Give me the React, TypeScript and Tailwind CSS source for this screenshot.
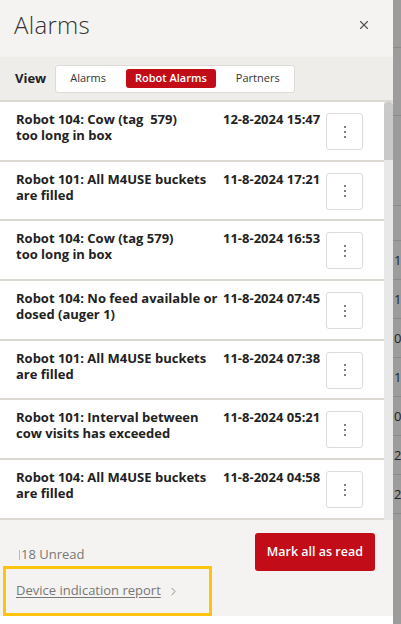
import React from 'react';
import { X, ChevronRight } from 'lucide-react';

const alarms = [
  { lines: ['Robot 104: Cow (tag  579)', 'too long in box'], date: '12-8-2024 15:47' },
  { lines: ['Robot 101: All M4USE buckets', 'are filled'], date: '11-8-2024 17:21' },
  { lines: ['Robot 104: Cow (tag 579)', 'too long in box'], date: '11-8-2024 16:53' },
  { lines: ['Robot 104: No feed available or', 'dosed (auger 1)'], date: '11-8-2024 07:45' },
  { lines: ['Robot 101: All M4USE buckets', 'are filled'], date: '11-8-2024 07:38' },
  { lines: ['Robot 101: Interval between', 'cow visits has exceeded'], date: '11-8-2024 05:21' },
  { lines: ['Robot 104: All M4USE buckets', 'are filled'], date: '11-8-2024 04:58' },
  { lines: ['Robot 101: Interval between', 'cow visits has exceeded'], date: '11-8-2024 03:12' },
];

const tabs = ['Alarms', 'Robot Alarms', 'Partners'];

export default function App() {
  return (
    <div className="flex h-[624px] w-[401px] overflow-hidden bg-[#9c9c9c] font-['Open_Sans',sans-serif] text-[#222]">
      {/* Drawer */}
      <div className="flex w-[393px] shrink-0 flex-col bg-white">
        {/* Header */}
        <div className="flex h-[57px] shrink-0 items-center justify-between bg-[#f5f3f1] pb-[7px] pl-[14px] pr-[22px]">
          <h1 className="text-[24px] font-light leading-none tracking-[0.3px] text-[#333]">Alarms</h1>
          <X className="h-[14px] w-[14px] text-[#555]" strokeWidth={2} />
        </div>

        {/* View switch */}
        <div className="flex h-[43px] shrink-0 items-center gap-[9px] bg-[#efedea] pl-[15px]">
          <span className="text-[13px] font-bold text-[#222]">View</span>
          <div className="flex h-[28px] items-center rounded-[3px] border border-[#dedad5] bg-white px-[3px] text-[11px]">
            {tabs.map((t) => (
              <span
                key={t}
                className={
                  t === 'Robot Alarms'
                    ? 'mx-[9px] rounded-[3px] bg-[#c20c17] px-[9px] py-[1px] font-semibold text-white'
                    : 'px-[11px] text-[#333]'
                }
              >
                {t}
              </span>
            ))}
          </div>
        </div>

        {/* List with scrollbar */}
        <div className="flex min-h-0 flex-1 border-t-2 border-[#dcd8d2]">
          <div className="min-w-0 flex-1 overflow-hidden">
            {alarms.map((a, i) => (
              <div
                key={i}
                className="flex h-[59.7px] items-start border-b-2 border-[#dcd8d2] bg-white pl-[16px] pr-[8px] pt-[9px]"
              >
                <p className="w-[205px] whitespace-pre text-[13px] font-bold leading-[16px] text-[#222]">
                  {a.lines[0]}
                  <br />
                  {a.lines[1]}
                </p>
                <span className="ml-[2px] w-[100px] whitespace-nowrap text-[13px] font-bold leading-[16px] text-[#222]">
                  {a.date}
                </span>
                <button className="ml-[3px] mt-[2px] flex h-[37px] w-[37px] flex-col items-center justify-center gap-[3px] rounded-[3px] border border-[#dcdcdc] bg-white">
                  <span className="h-[2px] w-[2px] rounded-full bg-[#555]" />
                  <span className="h-[2px] w-[2px] rounded-full bg-[#555]" />
                  <span className="h-[2px] w-[2px] rounded-full bg-[#555]" />
                </button>
              </div>
            ))}
          </div>
          <div className="w-[9px] shrink-0 bg-[#e8e8e8]">
            <div className="h-[58px] rounded-t-[4px] bg-[#c9c9c9]" />
          </div>
        </div>

        {/* Footer */}
        <div className="flex h-[96px] shrink-0 flex-col bg-[#f5f3f1] pl-[3px]">
          <div className="flex items-start justify-between pr-[18px] pt-[13px]">
            <div className="flex items-center pl-[16px] pt-[12px] text-[13px] text-[#777]">
              <span className="mr-[1px] h-[10px] w-px bg-[#bbb]" />
              18 Unread
            </div>
            <button className="h-[38px] rounded-[3px] bg-[#c20c17] px-[12px] text-[12.5px] font-semibold text-white">
              Mark all as read
            </button>
          </div>
          <div className="-mt-[5px] flex h-[51px] w-[209px] items-center border-[3px] border-[#fcc30f] pl-[10px]">
            <span className="text-[13px] text-[#777] underline underline-offset-2">Device indication report</span>
            <ChevronRight className="ml-[6px] h-[13px] w-[13px] text-[#888]" strokeWidth={1.75} />
          </div>
        </div>
        <div className="h-[8px] shrink-0 bg-white" />
      </div>

      {/* Dimmed page behind */}
      <div className="flex flex-1 flex-col text-[13px] leading-none text-[#222]">
        <div className="h-[48px] border-b border-[#8a8a8a]" />
        <div className="h-[68px] border-b border-[#8a8a8a]" />
        <div className="h-[90px] border-b border-[#8a8a8a]" />
        <div className="h-[35px] border-b border-[#8a8a8a]" />
        {['1', '1', '0', '1', '0', '2', '2'].map((c, i) => (
          <div key={i} className="flex h-[39px] items-center border-b border-[#8a8a8a] pl-px">
            {c}
          </div>
        ))}
      </div>
    </div>
  );
}
